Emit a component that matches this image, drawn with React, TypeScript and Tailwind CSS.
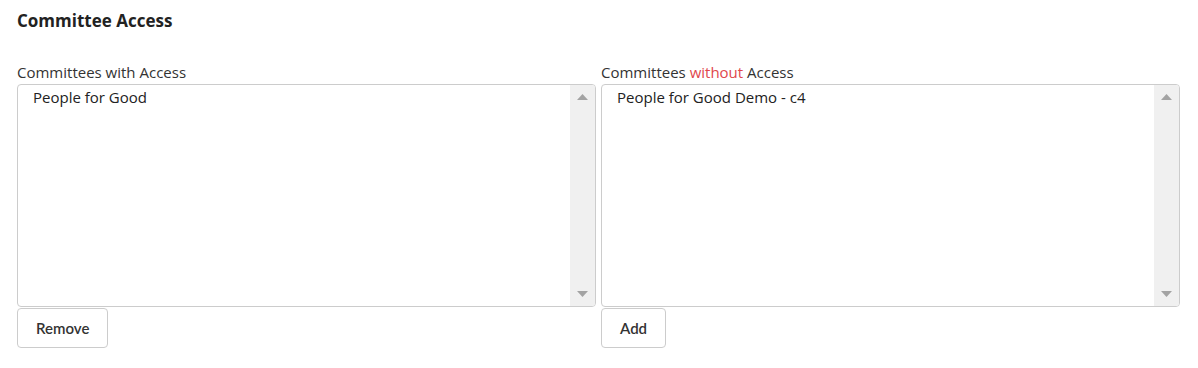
import React from "react";

function ListBox({ items }: { items: string[] }) {
  return (
    <div className="flex h-[223px] rounded-[4px] border border-[#cccccc] bg-white overflow-hidden">
      <div className="flex-1 pt-[2px] pl-[15px]">
        {items.map((it) => (
          <div key={it} className="text-[15px] leading-[20px] text-[#222222]">
            {it}
          </div>
        ))}
      </div>
      <div className="flex w-[25px] flex-col items-center justify-between bg-[#f0f0f0] py-[9px]">
        <svg width="11" height="6" viewBox="0 0 11 6">
          <polygon points="5.5,0 11,6 0,6" fill="#a3a3a3" />
        </svg>
        <svg width="11" height="6" viewBox="0 0 11 6">
          <polygon points="0,0 11,0 5.5,6" fill="#a3a3a3" />
        </svg>
      </div>
    </div>
  );
}

export default function App() {
  return (
    <div
      className="w-[1198px] h-[368px] bg-white pl-[17px] pr-[18px] pt-[9px]"
      style={{ fontFamily: '"Open Sans", "Noto Sans", Arial, sans-serif' }}
    >
      <h2 className="text-[17px] leading-[24px] font-bold text-[#222222]">Committee Access</h2>
      <div className="mt-[29px] grid grid-cols-2 gap-[5px]">
        <div>
          <div className="mb-[2px] text-[15px] leading-[20px] text-[#333333]">Committees with Access</div>
          <ListBox items={["People for Good"]} />
          <button
            className="mt-[1px] h-[40px] rounded-[4px] border border-[#cccccc] bg-white px-[18px] text-[15px] font-semibold text-[#333333]"
            style={{ fontFamily: 'Lato, "Open Sans", sans-serif' }}
          >
            Remove
          </button>
        </div>
        <div>
          <div className="mb-[2px] text-[15px] leading-[20px] text-[#333333]">
            Committees <span className="text-[#e0474c]">without</span> Access
          </div>
          <ListBox items={["People for Good Demo - c4"]} />
          <button
            className="mt-[1px] h-[40px] rounded-[4px] border border-[#cccccc] bg-white px-[18px] text-[15px] font-semibold text-[#333333]"
            style={{ fontFamily: 'Lato, "Open Sans", sans-serif' }}
          >
            Add
          </button>
        </div>
      </div>
    </div>
  );
}
